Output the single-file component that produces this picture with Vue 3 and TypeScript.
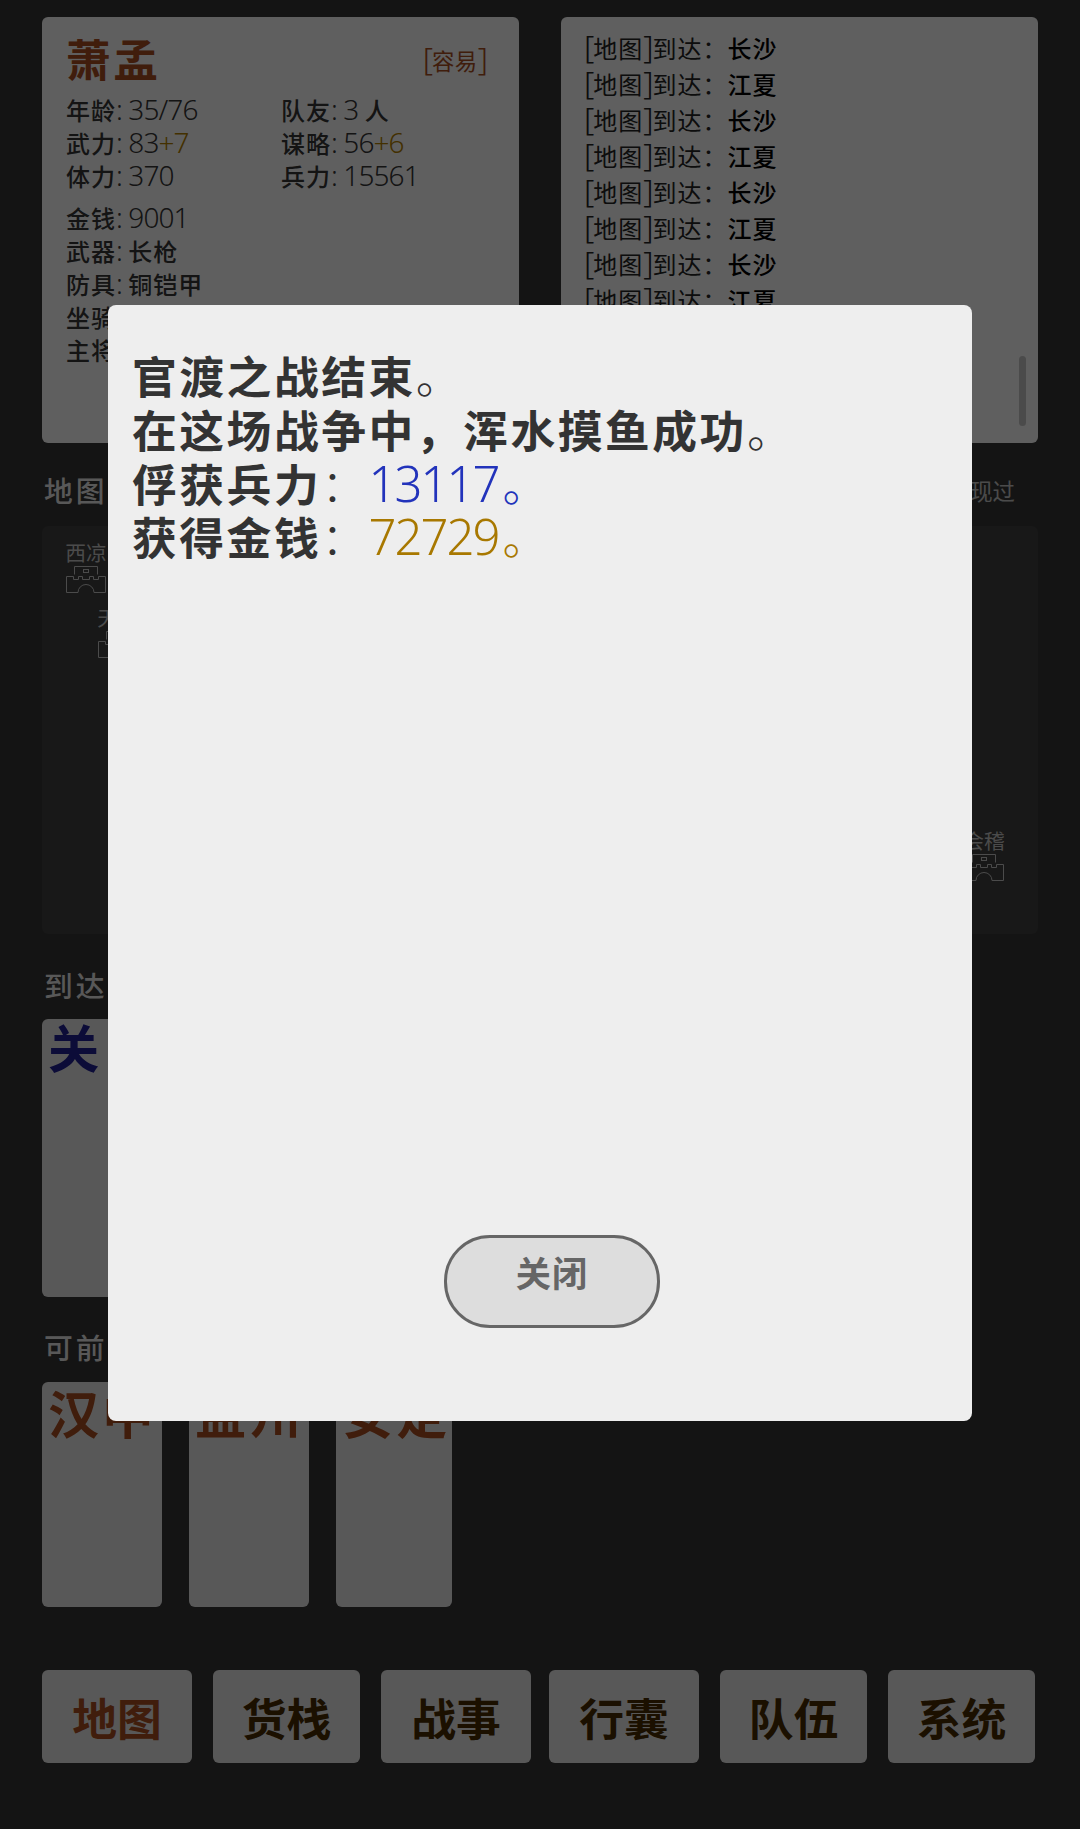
<script setup lang="ts">
interface Stat {
  label: string
  value?: string
  bonus?: string
  unit?: string
}

const stats: Stat[] = [
  { label: '年龄', value: '35/76' },
  { label: '队友', value: '3 ', unit: '人' },
  { label: '武力', value: '83', bonus: '+7' },
  { label: '谋略', value: '56', bonus: '+6' },
  { label: '体力', value: '370' },
  { label: '兵力', value: '15561' },
]

const gear: Stat[] = [
  { label: '金钱', value: '9001' },
  { label: '武器', unit: '长枪' },
  { label: '防具', unit: '铜铠甲' },
  { label: '坐骑', unit: '无' },
  { label: '主将', unit: '无' },
]

const logs: string[] = ['长沙', '江夏', '长沙', '江夏', '长沙', '江夏', '长沙', '江夏', '长沙', '江夏']

const cities = [
  { name: '西凉', x: 22, y: 14 },
  { name: '天水', x: 54, y: 79 },
  { name: '会稽', x: 920, y: 302 },
]

const nearby = ['汉中', '益州', '安定']
const navItems = ['地图', '货栈', '战事', '行囊', '队伍', '系统']
</script>

<template>
  <div class="page">
    <section class="top">
      <div class="card hero">
        <div class="hero-head">
          <h1 class="hero-name">萧孟</h1>
          <span class="hero-level"><i class="br">[</i>容易<i class="br">]</i></span>
        </div>
        <div class="stat-grid">
          <div v-for="s in stats" :key="s.label" class="stat">
            <span class="stat-k">{{ s.label }}</span><span class="num">: {{ s.value }}</span><span v-if="s.bonus" class="num gold">{{ s.bonus }}</span><span v-if="s.unit" class="stat-u">{{ s.unit }}</span>
          </div>
        </div>
        <div class="gear">
          <div v-for="g in gear" :key="g.label" class="stat">
            <span class="stat-k">{{ g.label }}</span><span class="num">: {{ g.value }}</span><span v-if="g.unit" class="stat-u">{{ g.unit }}</span>
          </div>
        </div>
      </div>

      <div class="card log">
        <div v-for="(city, i) in logs" :key="i" class="log-row">
          <i class="br">[</i>地图<i class="br">]</i>到达：<b>{{ city }}</b>
        </div>
        <span class="log-thumb"></span>
      </div>
    </section>

    <div class="section-head map-head">
      <h2>地图</h2>
      <span class="hint">地图上未出现过</span>
    </div>
    <div class="map">
      <div v-for="c in cities" :key="c.name" class="city" :style="{ left: c.x + 'px', top: c.y + 'px' }">
        <span>{{ c.name }}</span>
        <svg width="40" height="27" viewBox="0 0 40 27" fill="none" stroke="currentColor" stroke-width="1">
          <path d="M8.5 8.5V.5H31.5V8.5" />
          <rect x="17.5" y="3.5" width="5" height="3" />
          <path d="M.5 26.5V10.5H7.5V13.5H12.5V10.5H16.5V13.5H23.5V10.5H27.5V13.5H32.5V10.5H39.5V26.5H28A8 8 0 0 0 12 26.5Z" />
        </svg>
      </div>
    </div>

    <div class="section-head arrive-head"><h2>到达</h2></div>
    <div class="place place--here"><span>关·</span></div>

    <div class="section-head go-head"><h2>可前往</h2></div>
    <div class="places">
      <div v-for="p in nearby" :key="p" class="place"><span>{{ p }}</span></div>
    </div>

    <nav class="nav">
      <button v-for="(n, i) in navItems" :key="n" class="nav-btn" :class="{ 'nav-btn--on': i === 0 }">{{ n }}</button>
    </nav>

    <!-- battle result dialog -->
    <div class="overlay">
      <div class="dialog">
        <div class="dialog-text">
          <p>官渡之战结束<span class="dot">。</span></p>
          <p>在这场战争中，浑水摸鱼成功<span class="dot">。</span></p>
          <p>俘获兵力<span class="colon">：</span><span class="num big blue">13117</span><span class="dot blue">。</span></p>
          <p>获得金钱<span class="colon">：</span><span class="num big amber">72729</span><span class="dot amber">。</span></p>
        </div>
        <button class="close-btn">关闭</button>
      </div>
    </div>
  </div>
</template>

<style>
html,
body {
  margin: 0;
  background: #333;
}
</style>

<style scoped>
.page {
  position: relative;
  box-sizing: border-box;
  width: 1080px;
  height: 1829px;
  padding: 17px 42px 0;
  overflow: hidden;
  background: #333;
  font-family: "Noto Sans CJK SC", sans-serif;
  color: #333;
}

.num,
.br {
  font-family: "Noto Sans", "Noto Sans CJK SC", sans-serif;
  font-weight: 300;
  font-style: normal;
}

.top {
  display: grid;
  grid-template-columns: 477px 477px;
  gap: 42px;
}

.card {
  height: 426px;
  box-sizing: border-box;
  background: #eee;
  border-radius: 6px;
}

/* hero */
.hero {
  padding: 17px 24px;
}

.hero-head {
  display: flex;
  align-items: center;
  justify-content: space-between;
  box-sizing: border-box;
  height: 54px;
  margin-bottom: 4px;
  padding-bottom: 6px;
  color: #a04a20;
}

.hero-name {
  margin: 0;
  font-size: 44.8px;
  font-weight: 700;
  line-height: 48px;
  letter-spacing: 2.5px;
}

.hero-level {
  margin-right: 8px;
  font-size: 22.4px;
  line-height: 1;
  letter-spacing: 0.5px;
}

.hero-level .br {
  font-size: 32px;
  letter-spacing: -1px;
}

.stat-grid {
  display: grid;
  grid-template-columns: 215px 1fr;
}

.gear {
  margin-top: 9px;
}

.stat {
  height: 33px;
  font-size: 28px;
  line-height: 33px;
  letter-spacing: -0.9px;
  white-space: nowrap;
}

.stat-k {
  font-size: 24px;
  font-weight: 500;
  letter-spacing: 1px;
}

.stat-u {
  font-size: 24px;
  font-weight: 500;
  letter-spacing: 1px;
}

.gold {
  color: #a87800;
}

/* log */
.log {
  position: relative;
  padding: 11px 23px;
  overflow: hidden;
}

.log-row {
  height: 36px;
  font-size: 24px;
  line-height: 36px;
  letter-spacing: 1px;
  white-space: nowrap;
  color: #222;
}

.log-row .br {
  font-size: 32px;
  letter-spacing: -1px;
}

.log-row b {
  font-weight: 500;
  color: #000;
}

.log-thumb {
  position: absolute;
  top: 339px;
  right: 12px;
  width: 7px;
  height: 70px;
  border-radius: 4px;
  background: #bbb;
}

/* sections */
.section-head {
  display: flex;
  align-items: center;
  justify-content: space-between;
  padding: 0 23px 0 2px;
  color: #ddd;
}

.section-head h2 {
  margin: 0;
  font-size: 28.8px;
  font-weight: 500;
  line-height: 34px;
  letter-spacing: 3px;
}

.hint {
  font-size: 22.4px;
  color: #bbb;
}

.map-head {
  margin-top: 30px;
}

.map {
  position: relative;
  height: 408px;
  margin-top: 19px;
  border-radius: 6px;
  background: #3c3c3c;
}

.city {
  position: absolute;
  display: flex;
  flex-direction: column;
  align-items: center;
  gap: 2px;
  width: 44px;
  font-size: 20.8px;
  line-height: 24px;
  color: #bbb;
}

.arrive-head {
  margin-top: 34px;
}

.go-head {
  margin-top: 33px;
}

.place {
  box-sizing: border-box;
  height: 225px;
  padding: 0 6px;
  border-radius: 6px;
  background: #ddd;
  font-size: 51.2px;
  font-weight: 700;
  line-height: 60px;
  letter-spacing: 3px;
  white-space: nowrap;
  color: #a04a20;
}

.place--here {
  width: 120px;
  height: 278px;
  margin-top: 17px;
  line-height: 54px;
  color: #20208c;
}

.places {
  display: grid;
  grid-template-columns: 120px 120px 116px;
  gap: 27px;
  margin-top: 18px;
}

.nav {
  display: flex;
  gap: 21px;
  margin-top: 63px;
}

.nav-btn {
  width: 147px;
  height: 93px;
  padding: 0;
  border: 0;
  border-radius: 6px;
  background: #ddd;
  font: 700 44.8px "Noto Sans CJK SC", sans-serif;
  color: #442800;
}

.nav-btn:nth-child(1),
.nav-btn:nth-child(3),
.nav-btn:nth-child(4) {
  width: 150px;
}

.nav-btn:nth-child(4) {
  margin-left: -3px;
}

.nav-btn--on {
  color: #a04a20;
}

/* dialog */
.overlay {
  position: absolute;
  inset: 0;
  background: rgba(0, 0, 0, 0.6);
}

.dialog {
  position: absolute;
  top: 305px;
  left: 108px;
  display: flex;
  flex-direction: column;
  box-sizing: border-box;
  width: 864px;
  height: 1116px;
  padding: 43px 24px 93px;
  border-radius: 8px;
  background: #eee;
}

.dialog-text {
  flex: 1;
  font-size: 44.8px;
  font-weight: 700;
  line-height: 53.76px;
  letter-spacing: 2.5px;
  white-space: nowrap;
}

.dialog-text p {
  height: 53.76px;
  margin: 0;
}

.dot,
.colon {
  font-weight: 300;
}

.big {
  margin-right: 4px;
  font-size: 49px;
  letter-spacing: -2px;
}

.blue {
  color: #2233bb;
}

.amber {
  color: #a87800;
}

.close-btn {
  align-self: flex-start;
  box-sizing: border-box;
  width: 216px;
  height: 93px;
  margin-left: 312px;
  padding: 0 0 20px;
  border: 3px solid #666;
  border-radius: 46px;
  background: #ddd;
  font: 700 35.2px "Noto Sans CJK SC", sans-serif;
  letter-spacing: 1px;
  color: #666;
}
</style>
